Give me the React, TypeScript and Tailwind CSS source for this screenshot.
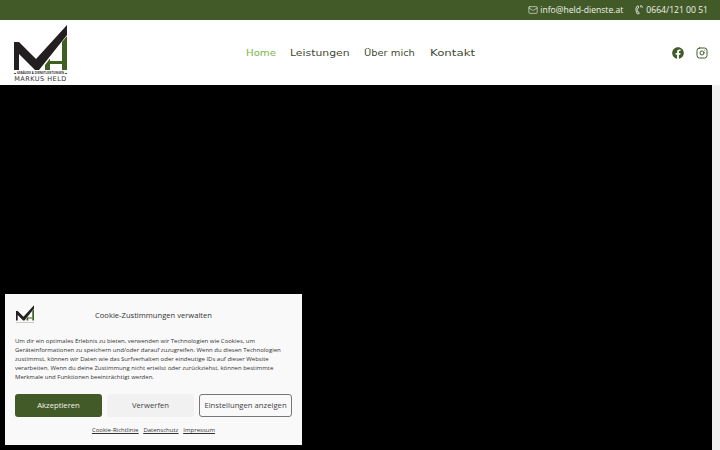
import React from "react";
import { Mail, Instagram } from "lucide-react";
import { FaFacebook } from "react-icons/fa";

const Logo = ({ className }: { className?: string }) => (
  <svg viewBox="0 0 53 46" className={className}>
    <path d="M0 17 L5 17 L22 34 L53 0 L53 10 L25 45 L21 45 L5 29 L5 45 L0 45 Z" fill="#231f20" />
    <path d="M48 17 L53 11 L53 45 L48 45 Z" fill="#3f5f22" />
    <path d="M31 40 L36 33.5 L36 36 L48 36 L48 39 L36 39 L36 45 L31 45 Z" fill="#3f5f22" />
  </svg>
);

const PhoneIcon = () => (
  <svg viewBox="0 0 8 10" className="h-[10px] w-[8px]" fill="none" stroke="currentColor" strokeWidth="0.8">
    <path d="M3.2 0.8 L1.6 1.6 C0.4 3.4 0.8 6.6 2.4 9 L4.2 8.6 L3.6 6.8 L2.6 6.8 C2 5.6 2 4.2 2.4 3.4 L3.6 3 Z" />
    <path d="M5 1 C5.8 1.2 6.2 1.8 6.2 2.6 M5.4 0.2 C6.8 0.4 7.4 1.4 7.4 2.6" />
  </svg>
);

// the real menu font is a wide one we don't have, so stretch each label to its width
const navItems = [
  { label: "Home", className: "w-[29px] scale-x-[1.07] text-[#7ab648]" },
  { label: "Leistungen", className: "w-[59px] scale-x-[1.14]" },
  { label: "Über mich", className: "w-[51px] scale-x-[1.04]" },
  { label: "Kontakt", className: "w-[45px] scale-x-[1.24]" },
];

export default function App() {
  return (
    <div className="relative flex h-[450px] w-[720px] flex-col overflow-hidden bg-white font-['Open_Sans',sans-serif]">
      <div className="flex h-5 items-center justify-end gap-3 bg-[#425a28] pr-3 text-[8.6px] text-[#f2f2ec]">
        <span className="flex items-center gap-[2px]">
          <Mail size={10} strokeWidth={1.5} />
          info@held-dienste.at
        </span>
        <span className="flex items-center gap-[3px]">
          <PhoneIcon />
          0664/121 00 51
        </span>
      </div>

      <header className="flex h-[65px] items-center justify-between pl-[14px] pr-3">
        <div className="flex w-[53px] flex-col items-center pt-[1px]">
          <Logo className="h-[46px] w-[53px]" />
          <div className="mt-[1px] flex w-full items-center gap-[1px]">
            <div className="h-px flex-1 bg-[#3f5f22]" />
            <span className="whitespace-nowrap text-[3px] font-bold leading-[3px] text-[#333]">GEBÄUDE & DIENSTLEISTUNGEN</span>
            <div className="h-px flex-1 bg-[#3f5f22]" />
          </div>
          <span className="mt-[1px] whitespace-nowrap font-['DejaVu_Sans',sans-serif] text-[6.5px] leading-[6px] tracking-[0.5px] text-[#333]">MARKUS HELD</span>
        </div>
        <nav className="mr-[19px] mt-[1px] flex items-center gap-[15px] font-['DejaVu_Sans',sans-serif] text-[9.5px] text-[#3f4a30]">
          {navItems.map((item) => (
            <a key={item.label} className={`origin-left whitespace-nowrap ${item.className}`}>
              {item.label}
            </a>
          ))}
        </nav>
        <div className="flex items-center gap-3 text-[#425a28]">
          <FaFacebook size={12} />
          <Instagram size={12} />
        </div>
      </header>

      <div className="flex flex-1">
        <div className="flex-1 bg-black" />
        <div className="w-2 bg-[#f1f1f1]" />
      </div>

      <div className="absolute bottom-[5px] left-[5px] flex h-[151px] w-[297px] flex-col bg-[#f9f9f9] px-[10px] pt-[9px] text-[#333]">
        <div className="flex h-[22px] items-center">
          <div className="flex w-[20px] flex-col items-center">
            <Logo className="h-[16px] w-[18px]" />
            <div className="mt-[1px] h-px w-[18px] bg-[#c8cdbf]" />
          </div>
          <span className="flex-1 pr-[20px] pt-[3px] text-center text-[7.6px]">Cookie-Zustimmungen verwalten</span>
        </div>
        <p className="mt-[12px] text-[6px] leading-[9px]">
          Um dir ein optimales Erlebnis zu bieten, verwenden wir Technologien wie Cookies, um Geräteinformationen zu speichern und/oder darauf zuzugreifen. Wenn du diesen Technologien zustimmst, können wir Daten wie das Surfverhalten oder eindeutige IDs auf dieser Website verarbeiten. Wenn du deine Zustimmung nicht erteilst oder zurückziehst, können bestimmte Merkmale und Funktionen beeinträchtigt werden.
        </p>
        <div className="mt-[12px] flex gap-[5px] text-[7.7px]">
          <button className="h-[23px] w-[87px] rounded-[3px] bg-[#425a28] pt-[1px] text-[#f2f2ec]">Akzeptieren</button>
          <button className="h-[23px] w-[87px] rounded-[3px] bg-[#f1f1f1] pt-[1px] text-[#444]">Verwerfen</button>
          <button className="h-[23px] w-[93px] whitespace-nowrap rounded-[3px] border border-[#777] pt-[1px] text-[#444]">Einstellungen anzeigen</button>
        </div>
        <div className="mt-[9px] flex justify-center gap-[5px] text-[6px] underline">
          <a>Cookie-Richtlinie</a>
          <a>Datenschutz</a>
          <a>Impressum</a>
        </div>
      </div>
    </div>
  );
}
